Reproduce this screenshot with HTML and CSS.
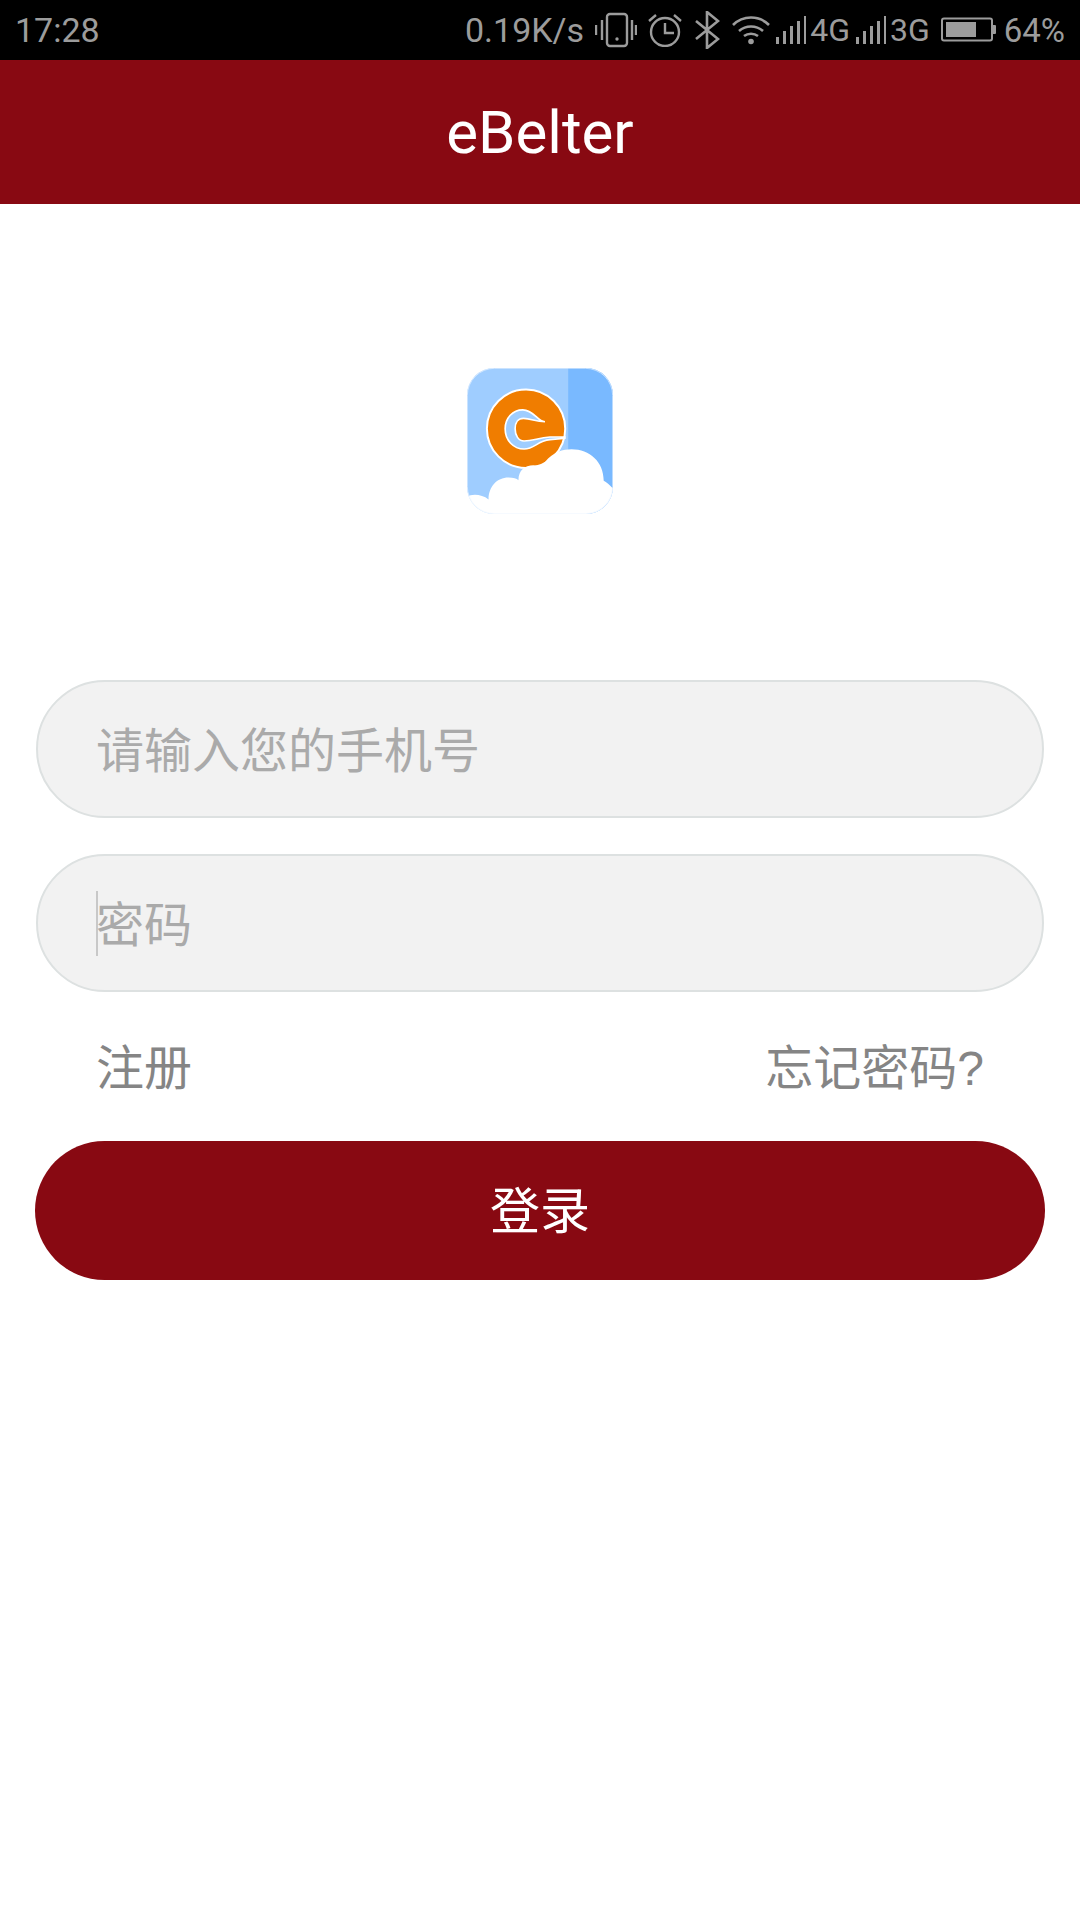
FILE: index.html
```html
<!DOCTYPE html>
<html>
	<head>
		<title> eBelter </title>
		<link rel="stylesheet" href="styles.css">
	</head>
	<body>
		<svg class="defs">
			<symbol id="signal" viewBox="0 0 32 28">
				<rect x="1" y="21" width="3" height="7"/>
				<rect x="8" y="15" width="3" height="13"/>
				<rect x="15" y="10" width="3" height="18"/>
				<rect x="22" y="5" width="3" height="23"/>
				<rect x="29" y="0" width="2" height="28"/>
			</symbol>
		</svg>

		<div class="status">
			<span class="time">17:28</span>
			<span class="speed">0.19K/s</span>
			<svg class="ico vibrate" width="42" height="36" viewBox="0 0 42 36">
				<rect x="12" y="2" width="20" height="32" rx="3" fill="none" stroke="#9c9c9c" stroke-width="2.4"/>
				<circle cx="22" cy="27" r="1.7" fill="#9c9c9c"/>
				<path d="M7 8v20M1 13v10M37 8v20M41 13v10" stroke="#9c9c9c" stroke-width="2.4" fill="none"/>
			</svg>
			<svg class="ico alarm" width="34" height="34" viewBox="0 0 34 34">
				<circle cx="17" cy="19" r="14" fill="none" stroke="#9c9c9c" stroke-width="2.4"/>
				<path d="M17 10v10h9" fill="none" stroke="#9c9c9c" stroke-width="2.4"/>
				<path d="M1 8l7-6M33 8l-7-6" fill="none" stroke="#9c9c9c" stroke-width="2.4"/>
			</svg>
			<svg class="ico bt" width="26" height="38" viewBox="0 0 26 38">
				<path d="M2 10l22 18-11 9V1l11 9L2 28" fill="none" stroke="#9c9c9c" stroke-width="2.6"/>
			</svg>
			<svg class="ico wifi" width="38" height="30" viewBox="0 0 38 30">
				<path d="M1 10c10-10 26-10 36 0M7 16c7-6 17-6 24 0M12 21c4-3 10-3 14 0" fill="none" stroke="#9c9c9c" stroke-width="2.6"/>
				<circle cx="19" cy="26.500" r="2.800" fill="#9c9c9c"/>
			</svg>
			<svg class="ico sig" width="32" height="28"><use href="#signal"/></svg>
			<span class="net">4G</span>
			<svg class="ico sig" width="32" height="28"><use href="#signal"/></svg>
			<span class="net">3G</span>
			<svg class="ico batt" width="55" height="26" viewBox="0 0 55 26">
				<rect x="1" y="1.500" width="50" height="22" rx="2" fill="none" stroke="#9c9c9c" stroke-width="2"/>
				<rect x="5" y="5" width="30" height="15" fill="#9c9c9c"/>
				<rect x="51" y="8" width="4" height="9" rx="1" fill="#9c9c9c"/>
			</svg>
			<span class="pct">64%</span>
		</div>

		<div class="header">eBelter</div>

		<div class="main">
			<svg class="logo" width="146" height="146" viewBox="50 52 440 440">
				<defs>
					<clipPath id="tile"><rect x="50" y="52" width="440" height="440" rx="82"/></clipPath>
				</defs>
				<g clip-path="url(#tile)">
					<rect x="50" y="52" width="440" height="440" fill="#9fcdff"/>
					<rect x="355" y="52" width="135" height="440" fill="#79b9ff"/>
					<circle cx="228" cy="235" r="118" fill="#f07d00" stroke="#fff" stroke-width="6"/>
					<path d="M285 214C262 214 252 178 218 178C188 178 165 203 165 235C165 270 190 296 222 296C255 296 260 272 300 268L345 264L345 260L300 260C265 262 250 272 222 272C205 272 195 255 195 235C195 215 205 204 220 204C245 204 255 214 285 214Z" fill="#9fcdff" stroke="#fff" stroke-width="5"/>
					<path d="M205 390C205 360 225 345 250 345C265 345 275 350 285 335C310 305 340 297 365 297C420 297 462 335 462 392C470 395 480 405 490 415L490 495L50 495L50 440C65 430 95 432 115 448C115 410 140 382 175 382C190 382 200 385 205 390Z" fill="#fff"/>
				</g>
				<rect x="51" y="53" width="438" height="438" rx="82" fill="none" stroke="#eef6ff" stroke-width="2"/>
			</svg>

			<div class="field"><span class="caret hidden"></span><span class="hint">请输入您的手机号</span></div>
			<div class="field"><span class="caret"></span><span class="hint">密码</span></div>

			<div class="links">
				<span>注册</span>
				<span>忘记密码?</span>
			</div>

			<div class="login">登录</div>
		</div>
	</body>
</html>
```

FILE: styles.css
```css
body {
	margin: 0;
	background: #fff;
	font-family: Roboto, "Noto Sans CJK SC", sans-serif;
}
.defs {
	display: none;
}
.status {
	display: flex;
	align-items: center;
	height: 60px;
	background: #000;
	color: #9c9c9c;
	font-size: 34px;
	padding: 0 15px;
}
.time {
	margin-right: auto;
}
.ico {
	flex: none;
	fill: #9c9c9c;
}
.vibrate,
.alarm,
.batt {
	margin-left: 11px;
}
.bt,
.wifi {
	margin-left: 12px;
}
.sig {
	margin-left: 5px;
}
.net {
	margin-left: 3px;
	font-size: 32px;
}
.pct {
	margin-left: 8px;
	font-size: 33px;
}
.header {
	height: 144px;
	line-height: 146px;
	background: #880912;
	color: #fff;
	font-size: 60px;
	text-align: center;
}
.main {
	display: flex;
	flex-direction: column;
	align-items: center;
	padding: 164px 36px 0;
}
.logo {
	margin-bottom: 166px;
}
.field {
	display: flex;
	align-items: center;
	box-sizing: border-box;
	width: 100%;
	height: 138px;
	margin-bottom: 36px;
	padding-left: 58px;
	background: #f2f2f2;
	border: 2px solid #dde1e1;
	border-radius: 69px;
}
.caret {
	width: 2px;
	height: 65px;
	margin-right: -2px;
	background: #c8c8c8;
}
.caret.hidden {
	background: none;
}
.hint {
	margin-bottom: 4px;
	font-size: 48px;
	color: #aaa;
}
.links {
	display: flex;
	justify-content: space-between;
	align-items: center;
	align-self: stretch;
	box-sizing: border-box;
	height: 113px;
	padding: 0 60px 42px;
	font-family: "Liberation Sans", "Noto Sans CJK SC", sans-serif;
	font-size: 48px;
	color: #858585;
}
.login {
	align-self: stretch;
	height: 139px;
	line-height: 143px;
	margin: 0 -1px;
	background: #880912;
	color: #fff;
	font-size: 50px;
	text-align: center;
	border-radius: 70px;
}
```
